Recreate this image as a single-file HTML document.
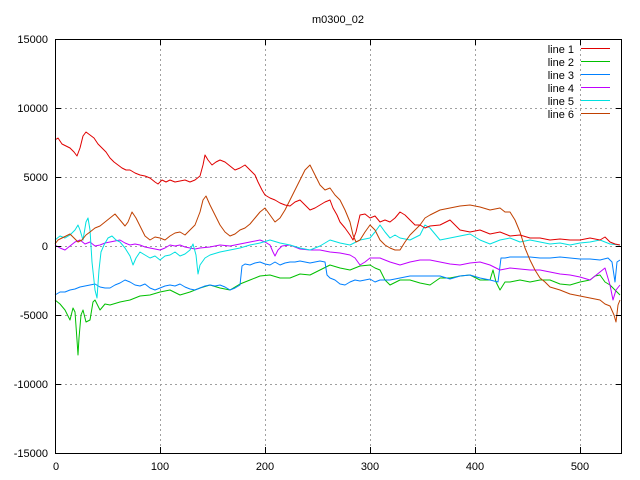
<!DOCTYPE html>
<html><head><style>body{margin:0;background:#fff}svg{display:block}text{font-family:"Liberation Sans",sans-serif;font-size:11px;fill:#000}</style></head><body>
<svg width="640" height="480" viewBox="0 0 640 480" xmlns="http://www.w3.org/2000/svg">
<rect width="640" height="480" fill="#fff"/>
<g stroke="#a0a0a0" stroke-dasharray="2,3" stroke-width="1">
<path d="M160.5 39V453M265.5 39V453M370.5 39V453M475.5 39V453M580.5 39V453"/>
<path d="M55 108.5H622M55 177.5H622M55 246.5H622M55 315.5H622M55 384.5H622"/>
</g>
<g fill="none" stroke-width="1" stroke-linejoin="round">
<polyline stroke="#00c000" points="55,300 60,304 65,310 68,316 70,320 73,308 75,312 77,340 78,355 79,338 81,315 83,310 86,322 90,320 93,302 95,300 100,310 105,304 110,305 120,302 130,300 140,296 150,295 160,292 170,290 180,295 190,292 200,288 210,285 220,288 230,290 240,284 250,280 260,276 270,275 280,278 290,278 300,274 310,275 320,270 330,265 340,268 350,270 360,266 370,265 375,268 380,270 385,280 390,285 400,280 410,280 420,283 430,285 440,278 450,278 460,276 470,275 480,280 490,280 493,270 496,282 500,290 505,282 510,282 520,280 530,282 540,280 550,280 560,284 570,285 580,282 590,280 595,276 600,275 605,282 610,285 615,290 620,295"/>
<polyline stroke="#0080ff" points="55,295 60,292 65,292 70,290 75,289 80,287 85,286 90,285 95,284 100,287 105,288 110,288 115,285 120,283 125,280 130,282 135,285 140,286 145,284 150,288 155,290 160,288 165,286 170,285 175,286 180,284 185,287 190,289 195,290 200,288 205,286 210,285 215,286 220,285 225,287 230,290 235,288 240,285 242,266 245,264 250,265 255,263 260,262 265,264 270,265 275,262 280,265 285,263 290,262 295,262 300,261 305,262 310,263 315,262 320,261 325,262 327,275 330,278 335,280 340,284 345,285 350,282 355,280 360,281 365,280 370,279 375,282 380,280 390,280 400,278 410,276 420,276 430,276 440,276 450,279 460,276 470,275 480,278 490,280 498,282 501,258 505,258 510,257 520,257 530,257 540,258 550,258 560,257 570,258 580,259 590,259 600,260 608,258 612,262 615,282 617,262 620,260"/>
<polyline stroke="#c000ff" points="55,245 60,248 65,250 70,246 75,242 80,240 85,244 90,242 95,246 100,245 105,243 110,242 115,241 120,240 125,243 130,245 135,244 140,245 145,247 150,248 155,249 160,250 165,248 170,245 175,246 180,245 185,247 190,248 195,249 200,248 210,247 220,245 230,246 240,244 250,242 260,240 265,242 270,245 273,252 275,256 278,250 282,246 290,245 295,247 300,249 310,250 320,250 330,252 340,253 350,255 355,258 360,265 365,262 370,258 380,258 390,262 400,265 410,262 420,260 430,260 440,262 450,264 460,265 470,263 480,262 490,265 500,270 510,268 520,269 530,270 540,270 550,272 560,274 570,275 580,277 590,280 595,276 600,272 605,268 610,285 613,300 616,290 620,285"/>
<polyline stroke="#00e0e0" points="55,240 60,236 65,238 70,235 75,230 78,225 80,230 83,240 86,222 88,218 90,230 92,262 95,290 97,298 99,270 101,252 104,245 108,238 112,236 116,240 120,242 125,248 130,256 133,265 136,258 140,252 145,255 150,258 155,256 160,260 165,256 170,255 175,252 180,256 185,254 190,250 193,244 196,255 198,274 200,265 205,258 210,255 220,252 230,250 240,248 250,245 260,243 270,240 280,243 290,245 300,248 310,250 320,246 330,240 340,243 350,245 360,240 370,238 375,232 380,225 385,232 390,238 395,235 400,238 410,240 420,235 425,225 430,228 440,240 450,238 460,236 470,234 480,240 490,244 500,240 510,238 520,242 530,240 540,242 550,244 560,243 570,245 580,243 590,242 600,240 610,244 620,245"/>
<polyline stroke="#c04000" points="55,244 58,240 62,238 66,236 70,234 74,238 78,242 82,240 86,235 90,232 95,228 100,226 105,222 110,218 115,214 120,220 125,226 128,222 132,212 136,218 140,226 145,236 150,240 155,237 160,238 165,240 170,236 175,233 180,232 185,235 190,230 195,225 200,212 203,200 206,196 210,205 215,215 220,225 225,232 230,236 235,234 240,230 245,228 250,224 255,218 260,212 265,208 270,215 275,222 280,218 285,210 290,200 295,190 300,180 305,170 310,165 315,175 320,185 325,190 330,188 335,195 340,200 345,210 350,222 353,235 356,242 360,240 365,232 370,225 375,230 380,240 385,245 390,248 395,250 400,250 405,242 410,235 415,230 420,225 425,218 430,215 440,210 450,208 460,206 470,205 480,207 490,210 500,208 505,212 510,212 515,220 520,232 525,248 530,260 535,270 540,278 545,282 550,287 560,290 570,294 580,296 590,298 600,300 605,304 610,306 614,315 616,322 618,305 620,300"/>
<polyline stroke="#e00000" points="55,140 58,138 62,144 66,146 70,148 74,152 77,156 80,148 83,136 86,132 90,135 94,138 98,144 102,148 106,152 110,158 114,162 118,165 122,168 126,170 130,170 135,173 140,175 145,176 150,178 155,182 158,184 162,180 166,182 170,180 175,182 180,181 185,180 190,182 195,180 200,176 203,165 205,155 208,160 212,165 216,162 220,160 225,162 230,166 235,170 240,168 245,165 250,170 255,175 258,182 262,190 265,195 270,198 275,200 280,203 285,205 290,206 295,202 300,200 305,205 310,210 315,208 320,205 325,202 330,200 333,208 337,215 340,222 345,228 350,235 353,240 356,232 360,215 365,214 370,218 375,216 380,222 385,220 390,222 395,218 400,212 405,215 410,220 415,225 420,225 425,228 430,226 440,225 450,220 455,225 460,230 470,232 480,230 490,234 500,232 510,236 520,235 530,238 540,238 550,240 560,239 570,240 580,240 590,238 600,240 605,237 610,242 615,244 620,245"/>
</g>
<rect x="55.5" y="39.5" width="566" height="414" fill="none" stroke="#000"/>
<g stroke="#000"><path d="M160.5 453v-6M265.5 453v-6M370.5 453v-6M475.5 453v-6M580.5 453v-6M160.5 39v6M265.5 39v6M370.5 39v6M475.5 39v6M580.5 39v6M55 108.5h6M55 177.5h6M55 246.5h6M55 315.5h6M55 384.5h6M622 108.5h-6M622 177.5h-6M622 246.5h-6M622 315.5h-6M622 384.5h-6"/></g>
<text x="338" y="23" text-anchor="middle">m0300_02</text>
<g text-anchor="end">
<text x="48" y="43">15000</text><text x="48" y="112">10000</text><text x="48" y="181">5000</text><text x="48" y="250">0</text><text x="48" y="319">-5000</text><text x="48" y="388">-10000</text><text x="48" y="457">-15000</text>
</g>
<g text-anchor="middle">
<text x="56" y="470">0</text><text x="160" y="470">100</text><text x="265" y="470">200</text><text x="370" y="470">300</text><text x="475" y="470">400</text><text x="580" y="470">500</text>
</g>
<g text-anchor="end">
<text x="574" y="53">line 1</text><text x="574" y="66">line 2</text><text x="574" y="79">line 3</text><text x="574" y="92">line 4</text><text x="574" y="105">line 5</text><text x="574" y="118">line 6</text>
</g>
<g stroke-width="1"><path d="M581 48.5h29" stroke="#e00000"/><path d="M581 61.5h29" stroke="#00c000"/><path d="M581 74.5h29" stroke="#0080ff"/><path d="M581 87.5h29" stroke="#c000ff"/><path d="M581 100.5h29" stroke="#00e0e0"/><path d="M581 113.5h29" stroke="#c04000"/></g>
</svg>
</body></html>
